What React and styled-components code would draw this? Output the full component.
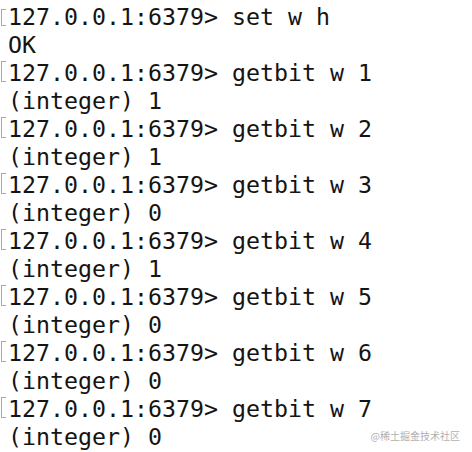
import React from "react";
import styled, { createGlobalStyle } from "styled-components";

const Global = createGlobalStyle`
  html, body { margin: 0; padding: 0; background: #ffffff; }
  #root { width: 472px; height: 452px; }
`;

const Terminal = styled.div`
  position: relative;
  width: 472px;
  height: 452px;
  box-sizing: border-box;
  padding-top: 3px;
  background: #ffffff;
  overflow: hidden;
`;

const Line = styled.div`
  display: grid;
  grid-template-columns: 8px 1fr;
  align-items: center;
  height: 28px;
  font-family: "DejaVu Sans Mono", "Liberation Mono", monospace;
  font-size: 23.25px;
  line-height: 28px;
  color: #141414;
  white-space: pre;
`;

const Gutter = styled.div`
  height: 28px;
  display: flex;
  align-items: flex-start;
`;

const Bracket = styled.span`
  display: block;
  box-sizing: border-box;
  margin-top: ${(p) => (p.$first ? 6 : 2)}px;
  margin-left: 1px;
  width: 5px;
  height: ${(p) => (p.$first ? 17 : 21)}px;
  border: 1.5px solid #a8a8a8;
  border-right: none;
`;

const Watermark = styled.div`
  position: absolute;
  right: 12px;
  bottom: 10px;
  font-family: "Noto Sans CJK SC", "Noto Sans", sans-serif;
  font-size: 10px;
  line-height: 12px;
  color: #b0b0b0;
`;

const lines = [
  { prompt: true, text: "127.0.0.1:6379> set w h" },
  { prompt: false, text: "OK" },
];
[1, 1, 0, 1, 0, 0, 0].forEach((v, i) => {
  lines.push({ prompt: true, text: `127.0.0.1:6379> getbit w ${i + 1}` });
  lines.push({ prompt: false, text: `(integer) ${v}` });
});

export default function App() {
  return (
    <>
      <Global />
      <Terminal>
        {lines.map((l, i) => (
          <Line key={i}>
            <Gutter>{l.prompt && <Bracket $first={i === 0} />}</Gutter>
            <span>{l.text}</span>
          </Line>
        ))}
        <Watermark>@稀土掘金技术社区</Watermark>
      </Terminal>
    </>
  );
}
